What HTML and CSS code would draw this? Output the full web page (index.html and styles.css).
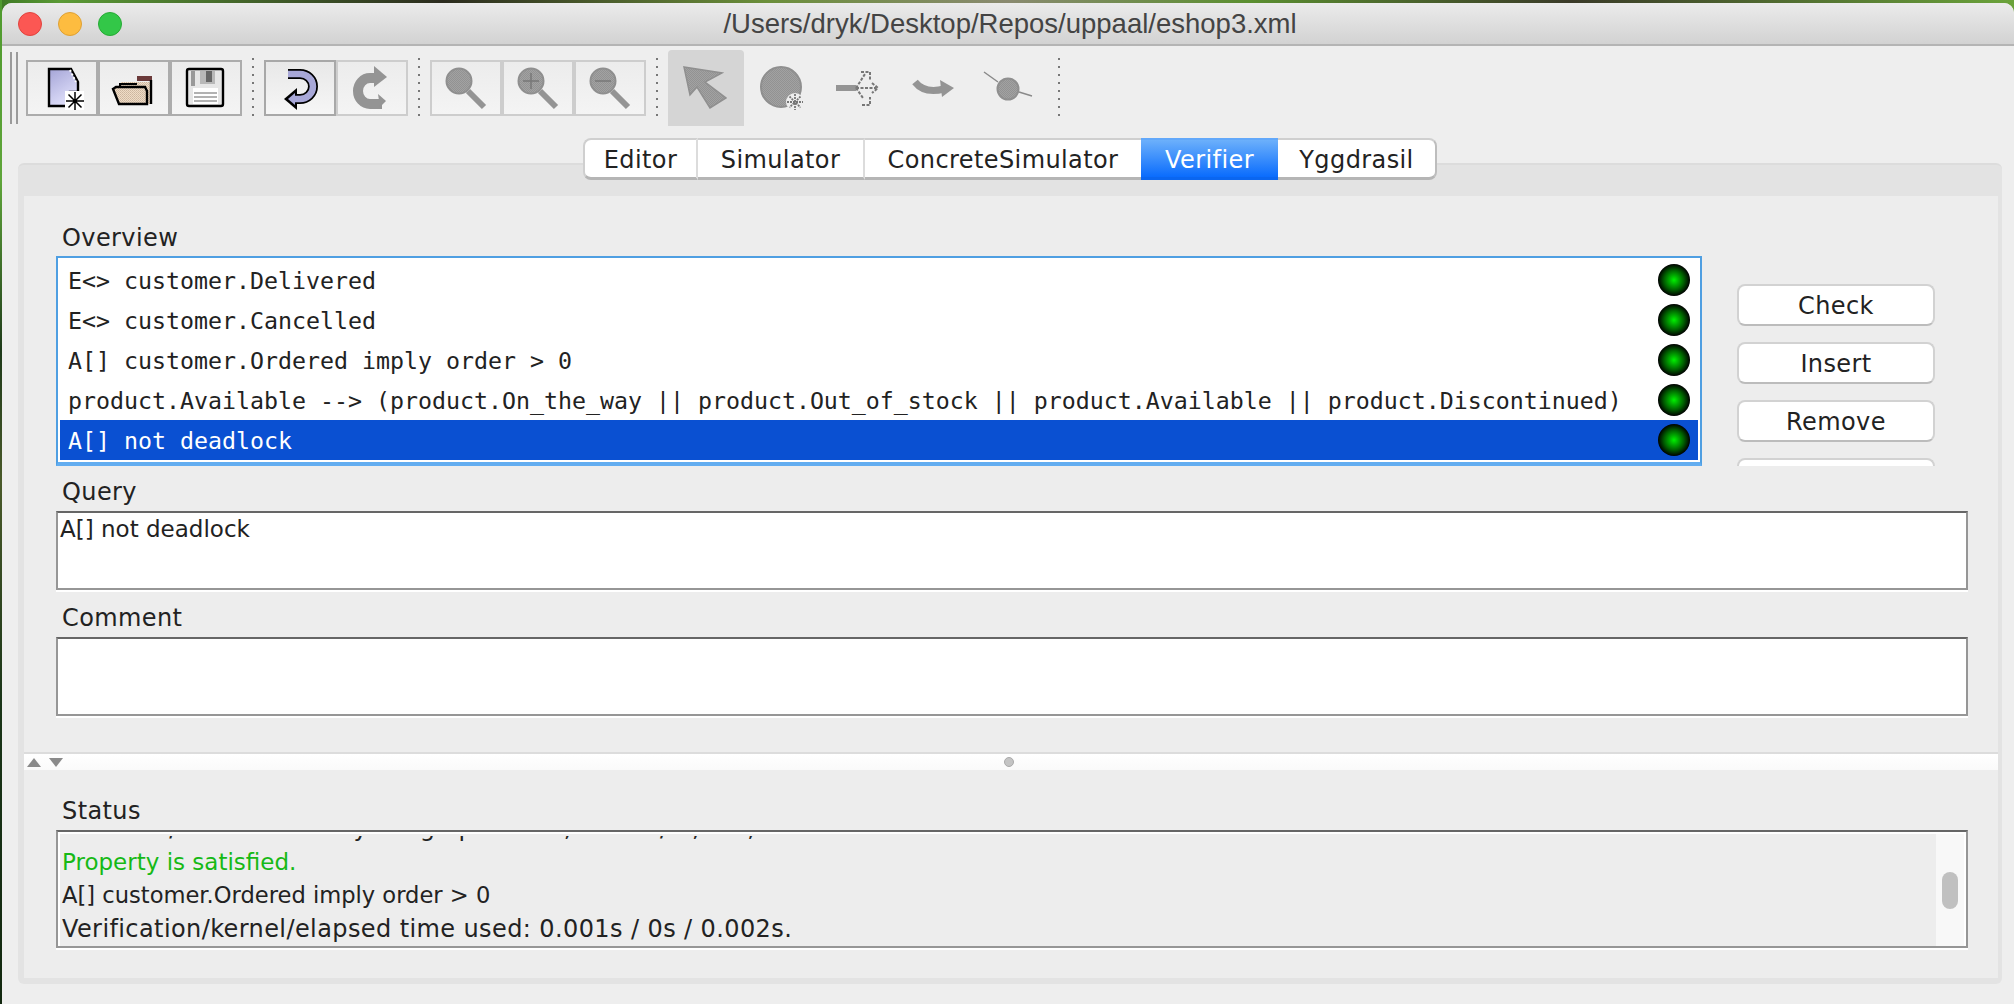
FILE: index.html
```html
<!DOCTYPE html>
<html lang="en">
<head>
<meta charset="utf-8">
<title>UPPAAL</title>
<link rel="stylesheet" href="styles.css">
</head>
<body>
<svg class="defs" width="0" height="0">
  <defs>
    <linearGradient id="docfill" x1="0" y1="0" x2="0.5" y2="1"><stop offset="0" stop-color="#a4a4d6"/><stop offset="1" stop-color="#e0e0fb"/></linearGradient>
    <pattern id="tan" width="2" height="2" patternUnits="userSpaceOnUse"><rect width="2" height="2" fill="#f0dcc6"/><rect width="1" height="1" fill="#cbb6a0"/><rect x="1" y="1" width="1" height="1" fill="#d4c0aa"/></pattern>
    <pattern id="grey" width="2" height="2" patternUnits="userSpaceOnUse"><rect width="2" height="2" fill="#a2a2a2"/><rect width="1" height="1" fill="#929292"/><rect x="1" y="1" width="1" height="1" fill="#929292"/></pattern>
  </defs>
</svg>
<div class="window">
  <header class="titlebar">
    <div class="lights"><span class="light red"></span><span class="light yellow"></span><span class="light green"></span></div>
    <div class="title">/Users/dryk/Desktop/Repos/uppaal/eshop3.xml</div>
  </header>
  <div class="toolbar">
    <div class="handle"></div>
    <div class="group">
      <div class="tbtn"><svg viewBox="2 2 68 52"><path d="M23 9H45L52 22V32H44V46H23Z" fill="url(#docfill)" stroke="#000" stroke-width="2.4"/><path d="M44 10L50 22" stroke="#fff" stroke-width="2" stroke-dasharray="2 2"/><rect x="39" y="31" width="19" height="19" fill="#fff"/><path d="M49 32V50M40 41H58M42.500 34.500L55.500 47.500M55.500 34.500L42.500 47.500" stroke="#000" stroke-width="1.500"/></svg></div>
      <div class="tbtn"><svg viewBox="2 2 68 52"><rect x="39" y="16" width="15" height="5" fill="#6b3a3a"/><path d="M23 27V22H53V44H22" fill="url(#tan)"/><path d="M53 20V44" stroke="#000" stroke-width="2.400"/><path d="M22 28V24H39" fill="none" stroke="#000" stroke-width="2"/><path d="M15 29L18 27H47L49 31V44H21Z" fill="url(#tan)" stroke="#000" stroke-width="2.400"/></svg></div>
      <div class="tbtn"><svg viewBox="2 2 68 52"><rect x="17" y="9" width="36" height="37" rx="2" fill="#e6e6e6" stroke="#000" stroke-width="2.400"/><rect x="21" y="11" width="4" height="15" fill="#999"/><rect x="30" y="11" width="15" height="13" fill="#b8b8b8"/><rect x="36" y="11" width="6" height="11" fill="#666"/><rect x="23" y="28" width="25" height="16" fill="#fff"/><path d="M24 33H47M24 37H47M24 41H47" stroke="#999" stroke-width="1.500"/></svg></div>
    </div>
    <div class="sep"></div>
    <div class="group">
      <div class="tbtn pressed"><svg viewBox="2 2 68 52"><path d="M24 14H36A13 12.500 0 0 1 36 39H30" fill="none" stroke="#000" stroke-width="10"/><path d="M20 39L33 28V50Z" fill="#000"/><path d="M24 14H36A13 12.500 0 0 1 36 39H30" fill="none" stroke="#a8a8d8" stroke-width="6.500"/><path d="M24 39L31 33V45Z" fill="#a8a8d8"/></svg></div>
      <div class="tbtn off"><svg viewBox="2 2 68 52"><path d="M40 18H34A12 13 0 0 0 34 44H46" fill="none" stroke="#949494" stroke-width="10"/><path d="M38 6L51 17L38 27Z" fill="#949494"/><path d="M42 34L50 41L44 47Z" fill="#949494"/></svg></div>
    </div>
    <div class="sep"></div>
    <div class="group">
      <div class="tbtn off"><svg viewBox="2 2 68 52"><path d="M38 31L54 47" stroke="#949494" stroke-width="6"/><circle cx="29" cy="21" r="12.500" fill="url(#grey)" stroke="#8f8f8f" stroke-width="2"/></svg></div>
      <div class="tbtn off"><svg viewBox="2 2 68 52"><path d="M38 31L54 47" stroke="#949494" stroke-width="6"/><circle cx="29" cy="21" r="12.500" fill="url(#grey)" stroke="#8f8f8f" stroke-width="2"/><path d="M29 13V29M21 21H37" stroke="#777" stroke-width="1.500"/></svg></div>
      <div class="tbtn off"><svg viewBox="2 2 68 52"><path d="M38 31L54 47" stroke="#949494" stroke-width="6"/><circle cx="29" cy="21" r="12.500" fill="url(#grey)" stroke="#8f8f8f" stroke-width="2"/><path d="M21 21H37" stroke="#777" stroke-width="1.500"/></svg></div>
    </div>
    <div class="sep"></div>
    <div class="tool selected"><svg viewBox="0 0 76 76"><path d="M16 17L54 23L37 32L58 48L42 58L29 37L22 45Z" fill="url(#grey)" stroke="#8f8f8f" stroke-width="1.500"/></svg></div>
    <div class="tool"><svg viewBox="0 0 76 76"><circle cx="37" cy="37" r="20" fill="url(#grey)" stroke="#8f8f8f" stroke-width="2"/><circle cx="51" cy="52" r="9" fill="#eee"/><path d="M51 44V60M43 52H59M45.500 46.500L56.500 57.500M56.500 46.500L45.500 57.500" stroke="#777" stroke-width="1.800" stroke-dasharray="2 1"/></svg></div>
    <div class="tool"><svg viewBox="0 0 76 76"><path d="M16 38H36" stroke="#949494" stroke-width="6"/><path d="M36 38L45 24M41 22H50V31M36 38H56M52 33L58 38L52 43M36 38L43 48M42 55H50V47" fill="none" stroke="#777" stroke-width="2" stroke-dasharray="3 1.500"/></svg></div>
    <div class="tool"><svg viewBox="0 0 76 76"><path d="M19 32C26 41 36 42 48 39" fill="none" stroke="#949494" stroke-width="7"/><path d="M44 30L58 38L46 47Z" fill="#949494"/></svg></div>
    <div class="tool"><svg viewBox="0 0 76 76"><path d="M12 22L26 32M47 42L60 46" stroke="#8a8a8a" stroke-width="1.500"/><circle cx="36" cy="39" r="10.500" fill="url(#grey)" stroke="#8f8f8f" stroke-width="2"/></svg></div>
    <div class="sep"></div>
  </div>
  <div class="tabs">
    <span class="tab t-editor">Editor</span>
    <span class="tab t-sim">Simulator</span>
    <span class="tab t-conc">ConcreteSimulator</span>
    <span class="tab t-ver active">Verifier</span>
    <span class="tab t-ygg">Yggdrasil</span>
  </div>
  <main class="pane">
    <div class="inner">
      <div class="upper">
        <div class="label l-overview">Overview</div>
        <div class="listrow">
          <div class="list">
            <div class="row"><span>E&lt;&gt; customer.Delivered</span><i class="led"></i></div>
            <div class="row"><span>E&lt;&gt; customer.Cancelled</span><i class="led"></i></div>
            <div class="row"><span>A[] customer.Ordered imply order &gt; 0</span><i class="led"></i></div>
            <div class="row"><span>product.Available --&gt; (product.On_the_way || product.Out_of_stock || product.Available || product.Discontinued)</span><i class="led"></i></div>
            <div class="row sel"><span>A[] not deadlock</span><i class="led"></i></div>
          </div>
          <div class="actions">
            <div class="btn">Check</div>
            <div class="btn">Insert</div>
            <div class="btn">Remove</div>
            <div class="btn">&nbsp;</div>
          </div>
        </div>
        <div class="label l-field">Query</div>
        <div class="box"><div class="boxtext">A[] not deadlock</div></div>
        <div class="label l-field">Comment</div>
        <div class="box"></div>
      </div>
      <div class="splitter">
        <span class="tri up"></span><span class="tri down"></span>
        <span class="grip"></span>
      </div>
      <div class="lower">
        <div class="label l-status">Status</div>
        <div class="statusbox">
          <div class="log">
            <div class="logline clipped"><span>Resident/virtual memory usage peaks: 6,160KB / 1,312,212KB.</span></div>
            <div class="logline ok">Property is satisfied.</div>
            <div class="logline narrow">A[] customer.Ordered imply order &gt; 0</div>
            <div class="logline">Verification/kernel/elapsed time used: 0.001s / 0s / 0.002s.</div>
          </div>
          <div class="scroll"><div class="thumb"></div></div>
        </div>
      </div>
    </div>
  </main>
</div>
</body>
</html>
```
FILE: styles.css
```css
* { box-sizing: border-box; }
html, body { margin: 0; height: 100%; }
body {
  width: 2014px;
  height: 1004px;
  overflow: hidden;
  padding: 3px 0 0 2px;
  background:
    linear-gradient(#4f9a2e 0, #5fa53a 18%, #1e3a1a 35%, #4a5a2a 48%, #1a3518 70%, #12280f 100%) left top / 2px 100% no-repeat,
    linear-gradient(90deg, #3f7a25 0, #5a9a35 3%, #2b2b1e 22%, #6b8f3a 38%, #8a8a70 50%, #5b8f30 62%, #3a3a28 78%, #6aa33a 100%);
  font-family: "DejaVu Sans", sans-serif;
  font-size: 24px;
  letter-spacing: 0.4px;
  color: #222;
}
.defs { position: absolute; }
.window {
  width: 2012px;
  height: 1001px;
  background: #eeeeee;
  border-radius: 10px 10px 0 0;
  display: flex;
  flex-direction: column;
  overflow: hidden;
}
.titlebar {
  height: 43px;
  flex: none;
  background: linear-gradient(#ebebeb, #d2d2d2);
  border-bottom: 2px solid #b4b4b4;
  display: flex;
  align-items: center;
  position: relative;
}
.lights { display: flex; gap: 16px; padding-left: 16px; }
.light { width: 24px; height: 24px; border-radius: 50%; }
.red { background: #fc5753; border: 1px solid #e0443e; }
.yellow { background: #fdbc40; border: 1px solid #dea034; }
.green { background: #33c748; border: 1px solid #27aa35; }
.title {
  position: absolute;
  left: 0;
  right: 0;
  text-align: center;
  font-family: "Liberation Sans", sans-serif;
  font-size: 27.500px;
  letter-spacing: 0;
  color: #444;
  padding-left: 4px;
}
.toolbar {
  height: 84px;
  flex: none;
  display: flex;
  align-items: center;
  padding-left: 8px;
}
.handle {
  width: 8px;
  height: 72px;
  border-left: 2px solid #9a9a9a;
  border-right: 2px solid #9a9a9a;
  margin-right: 8px;
}
.group { display: flex; }
.tbtn {
  width: 72px;
  height: 56px;
  border: 2px solid #acacac;
  background: linear-gradient(#ececec, #f4f4f4);
}
.tbtn svg, .tool svg { display: block; width: 100%; height: 100%; }
.tbtn.pressed { border-color: #a8a8a8; background: linear-gradient(#e8e8e8, #f6f6f6); }
.tbtn.off { border-color: #cdcdcd; }
.sep {
  width: 2px;
  height: 60px;
  margin: 0 10px;
  background: repeating-linear-gradient(#777 0 2px, transparent 2px 8px);
}
.tool { width: 76px; height: 76px; }
.tool.selected { background: #d5d5d5; border-radius: 4px 4px 0 0; }
.tabs {
  display: flex;
  height: 42px;
  margin: 8px 0 -17px 581px;
  position: relative;
  z-index: 1;
  flex: none;
}
.tab {
  display: flex;
  align-items: center;
  justify-content: center;
  padding-top: 2px;
  background: #fff;
  border-top: 2px solid #cfcfcf;
  border-bottom: 3px solid #b5b5b5;
  border-right: 2px solid #dcdcdc;
}
.t-editor { width: 115px; border-left: 2px solid #cfcfcf; border-radius: 8px 0 0 8px; }
.t-sim { width: 167px; }
.t-conc { width: 276px; border-right: 0; }
.t-ver { width: 137px; border-right: 0; }
.t-ygg { width: 159px; border-right: 2px solid #bdbdbd; border-radius: 0 8px 8px 0; }
.tab.active {
  background: linear-gradient(#6cb0fb, #0a6cfd);
  color: #fff;
  border-top-color: #62a8fa;
  border-bottom-color: #0a66f0;
}
.pane {
  flex: none;
  width: 1984px;
  height: 821px;
  margin-left: 16px;
  background: #e3e3e3;
  border-radius: 6px;
  padding: 33px 4px 4px 6px;
  border-top: 2px solid #dcdcdc;
}
.inner { height: 100%; background: #ededed; display: flex; flex-direction: column; margin-top: -2px; }
.upper { padding: 0 30px 0 32px; height: 556px; flex: none; }
.label { line-height: 28px; padding-left: 6px; display: flex; align-items: flex-end; }
.l-overview { height: 60px; padding-bottom: 4px; }
.l-field { height: 45px; padding-bottom: 5px; }
.listrow { display: flex; height: 210px; }
.list {
  width: 1646px;
  height: 210px;
  flex: none;
  border: 2px solid #4f9fe2;
  border-bottom: 4px solid #62adf0;
  padding: 2px;
  background: #fff;
}
.row {
  height: 40px;
  display: flex;
  align-items: center;
  justify-content: space-between;
  padding: 0 8px;
  font-family: "DejaVu Sans Mono", monospace;
  font-size: 23.250px;
  letter-spacing: 0;
  white-space: pre;
}
.row.sel { background: #0a50d2; color: #fff; }
.led {
  width: 32px;
  height: 32px;
  border-radius: 50%;
  background: radial-gradient(circle closest-side, #00f000 0, #00a800 30%, #006000 62%, #001800 90%, #000 100%);
}
.actions {
  margin-left: 35px;
  width: 198px;
  height: 210px;
  overflow: hidden;
  padding-top: 28px;
  display: flex;
  flex-direction: column;
  gap: 16px;
}
.btn {
  flex: none;
  height: 42px;
  padding-top: 2px;
  background: #fff;
  border: 2px solid #d2d2d2;
  border-bottom-color: #bcbcbc;
  border-radius: 8px;
  display: flex;
  align-items: center;
  justify-content: center;
}
.box {
  height: 79px;
  background: #fff;
  border: 2px solid #969696;
  border-top-color: #666;
  box-shadow: 0 2px 0 #fff;
}
.box + .l-field { height: 47px; }
.boxtext { font-size: 23px; letter-spacing: 0; line-height: 32px; padding: 0 2px; }
.splitter {
  height: 18px;
  flex: none;
  border-top: 2px solid #dcdcdc;
  background: linear-gradient(#fff, #fafafa);
  display: flex;
  align-items: center;
  position: relative;
  padding-left: 3px;
  gap: 8px;
}
.tri { width: 0; height: 0; border-left: 7px solid transparent; border-right: 7px solid transparent; }
.tri.up { border-bottom: 9px solid #8a8a8a; }
.tri.down { border-top: 9px solid #8a8a8a; }
.grip {
  position: absolute;
  left: 980px;
  top: 3px;
  width: 10px;
  height: 10px;
  border-radius: 50%;
  background: #c4c4c4;
  border: 1px solid #aaa;
}
.lower { padding: 0 30px 0 32px; }
.l-status { height: 60px; padding-bottom: 5px; }
.statusbox {
  height: 118px;
  border: 2px solid #969696;
  border-top-color: #666;
  box-shadow: 0 2px 0 #fff;
  padding: 2px 2px 0;
  display: flex;
  background: #fff;
}
.log { flex: 1; overflow: hidden; padding-left: 2px; background: #ededed; }
.logline { line-height: 33.500px; white-space: pre; }
.clipped {
  height: 11.500px;
  border-top: 2px solid #ededed;
  overflow: hidden;
  display: flex;
  align-items: flex-end;
}
.ok { color: #16b916; font-size: 23px; letter-spacing: 0; }
.narrow { font-size: 22.600px; letter-spacing: 0; }
.scroll { width: 28px; flex: none; background: #f8f8f8; padding: 38px 6px 0; }
.thumb { height: 37px; background: #c0c0c0; border-radius: 8px; }
```
